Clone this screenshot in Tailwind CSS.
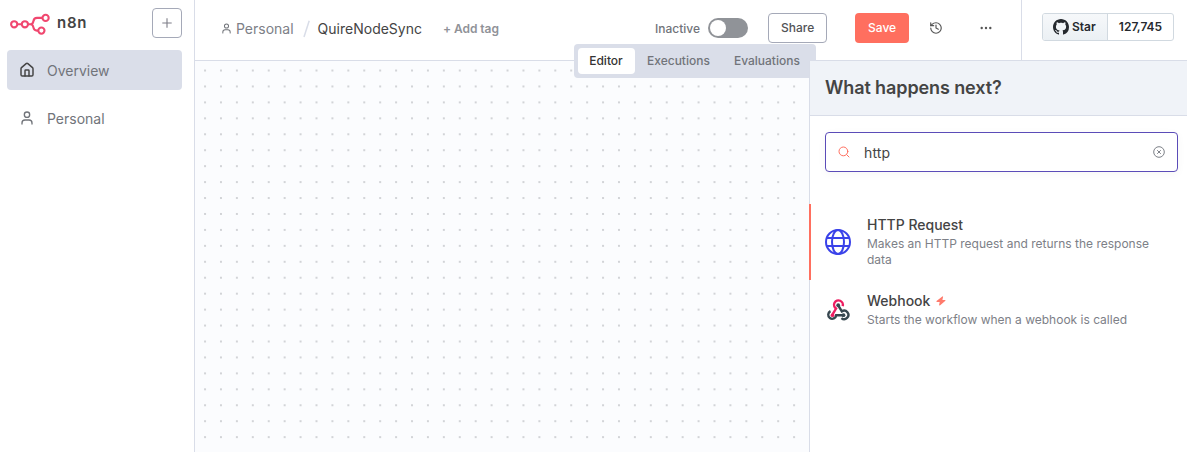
<!DOCTYPE html>
<html lang="en">
<head>
<meta charset="utf-8">
<title>QuireNodeSync - n8n</title>
<script src="https://cdn.jsdelivr.net/npm/@tailwindcss/browser@4"></script>
</head>
<body class="flex h-[452px] w-[1187px] overflow-hidden bg-white font-['Inter',sans-serif] text-[#444]">
<aside class="flex h-full w-[195px] shrink-0 flex-col border-r border-[#d9dde8]">
  <div class="flex h-[50px] items-start pt-2 pl-[10px] pr-3">
    <svg class="mt-[5px] h-[22px] w-10 shrink-0" viewBox="0 0 40 22" fill="none" stroke="#f0476f" stroke-width="2.1">
      <circle cx="4.2" cy="11.3" r="3.1"/><circle cx="14.9" cy="11.3" r="3.1"/><circle cx="35.6" cy="4.9" r="3.1"/><circle cx="31.4" cy="17.6" r="3.1"/>
      <path d="M7.4 11.3h4.3M18.1 11.3h2.3c2.2 0 2.6-1.1 3-3.1.4-2.2 1.3-3.3 3.6-3.3h5.4M20.4 11.3c2.2 0 2.6 1 3 3.1.4 2.2 1.3 3.2 3.5 3.2h1.3"/>
    </svg>
    <span class="ml-[7px] mt-[3px] text-[15px] leading-6 font-semibold tracking-[0.7px]">n8n</span>
    <button class="ml-auto flex h-[30px] w-[30px] items-center justify-center rounded border border-[#a5a9b8]">
      <svg class="h-3 w-3" viewBox="0 0 12 12" stroke="#7d7d87" stroke-width="1.1"><path d="M6 1.3v9.4M1.3 6h9.4"/></svg>
    </button>
  </div>
  <nav class="flex flex-col gap-2 pl-[7px] pr-3 text-[14px] text-[#71747a]">
    <a class="flex h-10 items-center rounded bg-[#dadee9] pl-3">
      <svg class="h-4 w-4" viewBox="0 0 24 24" fill="none" stroke="#444" stroke-width="2.2" stroke-linecap="round" stroke-linejoin="round"><path d="M15 21v-8a1 1 0 0 0-1-1h-4a1 1 0 0 0-1 1v8"/><path d="M3 10a2 2 0 0 1 .709-1.528l7-5.999a2 2 0 0 1 2.582 0l7 5.999A2 2 0 0 1 21 10v9a2 2 0 0 1-2 2H5a2 2 0 0 1-2-2z"/></svg>
      <span class="ml-3">Overview</span>
    </a>
    <a class="flex h-10 items-center pl-3">
      <svg class="h-4 w-4" viewBox="0 0 24 24" fill="none" stroke="#71747a" stroke-width="2" stroke-linecap="round" stroke-linejoin="round"><path d="M19.500 21v-1.500a4.500 4.500 0 0 0-4.500-4.500H9a4.500 4.500 0 0 0-4.500 4.500V21"/><circle cx="12" cy="7" r="4"/></svg>
      <span class="ml-3">Personal</span>
    </a>
  </nav>
</aside>

<main class="relative flex min-w-0 flex-1 flex-col">
  <header class="flex h-[61px] shrink-0 border-b border-[#d9dde8]">
    <div class="flex w-[827px] items-start border-r border-[#d9dde8] pt-[13px] pl-[26px]">
      <div class="flex h-[30px] w-[434px] items-center">
        <svg class="mt-px h-[11px] w-[11px] shrink-0" viewBox="0 0 24 24" fill="none" stroke="#71747a" stroke-width="2.2" stroke-linecap="round" stroke-linejoin="round"><path d="M20 22v-2.500a5 5 0 0 0-5-5H9a5 5 0 0 0-5 5V22"/><circle cx="12" cy="6.500" r="4.500"/></svg>
        <span class="ml-1 pt-px text-[14px] text-[#7d8087]">Personal</span>
        <svg class="ml-[9px] mt-[2px] h-[18px] w-[7px]" viewBox="0 0 7 18" stroke="#d9dde8" stroke-width="1.5"><path d="M6.200 .8 1 17"/></svg>
        <span class="ml-2 pt-px text-[14px]">QuireNodeSync</span>
        <span class="ml-[21px] pt-[2px] text-[12px] font-semibold tracking-[-0.05px] text-[#909298]">+ Add tag</span>
      </div>
      <span class="pt-[8px] text-[12px] leading-4 font-medium text-[#71747a]">Inactive</span>
      <span class="ml-[8px] mt-[5px] flex h-5 w-10 shrink-0 items-center rounded-full bg-[#909398] px-[2px]"><span class="h-4 w-4 rounded-full bg-white"></span></span>
      <button class="ml-5 h-[30px] w-[59px] shrink-0 rounded border border-[#a5a9b8] text-[12px] font-medium text-[#525356]">Share</button>
      <button class="ml-7 h-[30px] w-[54px] shrink-0 rounded bg-[#ff6f5f] text-[12px] font-medium text-white">Save</button>
      <svg class="mt-2 ml-5 h-[14px] w-[14px] shrink-0" viewBox="0 0 24 24" fill="none" stroke="#555" stroke-width="2" stroke-linecap="round" stroke-linejoin="round"><path d="M3 12a9 9 0 1 0 9-9 9.750 9.750 0 0 0-6.740 2.740L3 8"/><path d="M3 3v5h5"/><path d="M12 7v5l4 2"/></svg>
      <svg class="mt-2 ml-[36px] h-[14px] w-[14px] shrink-0" viewBox="0 0 14 14" fill="#555"><circle cx="2.700" cy="7" r="1.200"/><circle cx="7" cy="7" r="1.200"/><circle cx="11.300" cy="7" r="1.200"/></svg>
    </div>
    <div class="ml-5 mt-[13px] flex h-7 w-[132px] overflow-hidden rounded-[3px] border border-[#d1d9e0] text-[12px] font-semibold text-[#25292e]">
      <a class="flex w-[65px] items-center border-r border-[#d1d9e0] bg-linear-to-b from-[#f6f8fa] to-[#ebf0f4] pl-[10px]">
        <svg class="h-4 w-4" viewBox="0 0 16 16" fill="#25292e"><path d="M8 0C3.580 0 0 3.580 0 8c0 3.540 2.290 6.530 5.470 7.590.4.070.55-.17.55-.38 0-.19-.01-.82-.01-1.490-2.010.37-2.530-.49-2.690-.94-.09-.23-.48-.94-.82-1.130-.28-.15-.68-.52-.01-.53.63-.01 1.080.58 1.230.82.72 1.210 1.870.87 2.330.66.07-.52.28-.87.51-1.070-1.780-.2-3.640-.89-3.640-3.950 0-.87.31-1.590.82-2.150-.08-.2-.36-1.020.08-2.120 0 0 .67-.21 2.200.82.64-.18 1.320-.27 2-.27s1.360.09 2 .27c1.530-1.040 2.200-.82 2.200-.82.44 1.100.16 1.920.08 2.120.51.56.82 1.270.82 2.150 0 3.070-1.870 3.750-3.650 3.950.29.25.54.73.54 1.480 0 1.070-.01 1.930-.01 2.200 0 .21.150.46.550.38A8.010 8.010 0 0 0 16 8c0-4.420-3.580-8-8-8z"/></svg>
        <span class="ml-[3px]">Star</span>
      </a>
      <span class="flex flex-1 items-center justify-center">127,745</span>
    </div>
  </header>

  <div class="flex min-h-0 flex-1">
    <div class="w-[614px] shrink-0 bg-[#fbfcfe]">
      <svg class="h-full w-full">
        <defs><pattern id="dots" x="2.100" y="1.550" width="15.920" height="15.940" patternUnits="userSpaceOnUse"><circle cx="7.960" cy="7.960" r=".65" fill="#85888e"/></pattern></defs>
        <rect width="100%" height="100%" fill="url(#dots)"/>
      </svg>
    </div>
    <section class="relative z-20 flex flex-1 flex-col border-l border-[#d9dde8] bg-white">
      <h1 class="flex h-[55px] shrink-0 items-center border-b border-[#d9dde8] bg-[#f0f3f8] pb-[2px] pl-[15px] text-[18px] font-semibold tracking-[-0.1px] text-[#444]">What happens next?</h1>
      <div class="mt-4 mr-[9px] ml-[15px] flex h-10 shrink-0 items-center rounded border border-[#5b4cb8] pr-3 pl-3 shadow-[0_2px_8px_rgba(0,0,0,0.04)]">
        <svg class="h-3 w-3" viewBox="0 0 12 12" fill="none" stroke="#ff6f5f" stroke-linecap="round"><circle cx="5.400" cy="5.400" r="4.400"/><path d="m8.700 8.700 2.300 2.300"/></svg>
        <span class="ml-[14px] text-[14px] tracking-[0.15px]">http</span>
        <svg class="ml-auto h-3 w-3" viewBox="0 0 12 12" fill="none" stroke="#7d8087" stroke-width="1"><circle cx="6" cy="6" r="5.300"/><path d="m4.200 4.200 3.600 3.600M7.800 4.200 4.200 7.800"/></svg>
      </div>
      <div class="-ml-px mt-8 flex h-[76px] shrink-0 border-l-2 border-[#ff6f5f] pl-[14px]">
        <svg class="mt-[25px] h-[26px] w-[26px] shrink-0" viewBox="0 0 26 26" fill="none" stroke="#3a42e9" stroke-width="2"><circle cx="13" cy="13" r="12"/><ellipse cx="13" cy="13" rx="6" ry="12"/><path d="M1.700 9h22.600M1.700 17h22.600"/></svg>
        <div class="ml-4 pt-3">
          <div class="text-[14px] leading-[18px] font-medium">HTTP Request</div>
          <p class="w-[300px] pt-[2px] text-[12px] leading-4 text-[#7d8087]">Makes an HTTP request and returns the response data</p>
        </div>
      </div>
      <div class="-ml-px flex shrink-0 border-l-2 border-transparent pl-[14px]">
        <svg class="mt-[17px] h-[26px] w-[26px] shrink-0" viewBox="0 0 26 26" fill="none" stroke-width="2.400">
          <path d="M17.600 9.200A4.400 4.400 0 1 0 11.100 11.500L7.700 17.200" stroke="#ed1e61"/>
          <path d="M13.200 8.300l3.600 6.100a4.200 4.200 0 1 1-.4 6.700" stroke="#37474f"/>
          <path d="M5.500 14.200a4 4 0 1 0 5.700 4.100h7.300" stroke="#37474f"/>
          <circle cx="13.200" cy="8.200" r="1.900" fill="#37474f"/><circle cx="7.500" cy="18.200" r="1.900" fill="#ed1e61"/><circle cx="18.500" cy="18.200" r="1.900" fill="#37474f"/>
        </svg>
        <div class="ml-4 pt-3">
          <div class="flex items-center text-[14px] leading-[18px] font-medium">Webhook
            <svg class="ml-[6px] h-[10px] w-[10px]" viewBox="0 0 10 10" fill="#ff7b6c"><path d="M6.300.4.500 5.100q-.3.600.3.800h2.900l-.6 3.200q.2.600.8.300l5.500-4.600q.3-.5-.3-.8H6.400L7.100.7Q6.900.200 6.300.400z"/></svg>
          </div>
          <p class="pt-[2px] text-[12px] leading-4 text-[#7d8087]">Starts the workflow when a webhook is called</p>
        </div>
      </div>
    </section>
  </div>

  <div class="absolute top-[44px] left-[379px] z-10 flex h-[34px] w-[242px] items-center rounded bg-[#dadee9] p-1 text-[12px] font-medium text-[#71747a]">
    <span class="flex h-[26px] w-[57px] items-center justify-center rounded bg-white pr-px text-[#333]">Editor</span>
    <span class="ml-3">Executions</span>
    <span class="ml-6">Evaluations</span>
  </div>
</main>
</body>
</html>
